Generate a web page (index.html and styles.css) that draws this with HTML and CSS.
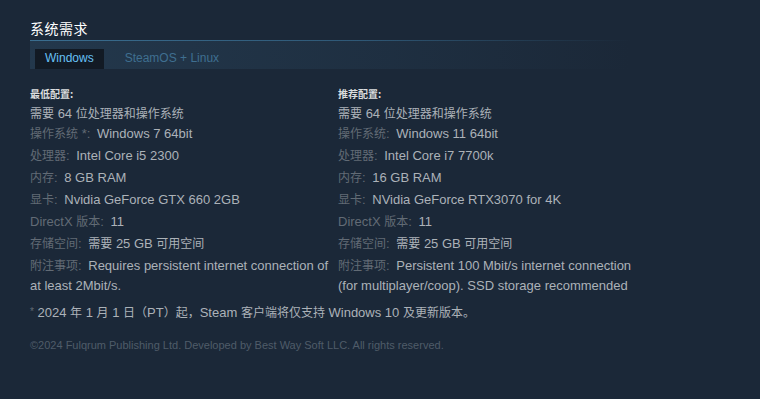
FILE: index.html
```html
<!DOCTYPE html>
<html lang="zh-CN">
<head>
  <meta charset="UTF-8" />
  <meta name="viewport" content="width=device-width, initial-scale=1.0"/>
  <title>系统需求</title>
  <link rel="stylesheet" href="styles.css">
</head>
<body>
  <div class="sysreq">
    <h2 class="sysreq-title">系统需求</h2>

    <div class="sysreq-tabs">
      <div class="tab active">Windows</div>
      <div class="tab">SteamOS + Linux</div>
    </div>

    <div class="sysreq-cols">
      <ul class="req-list">
        <li class="req-head">最低配置:</li>
        <li class="first"><span class="zh">需要</span> 64 <span class="zh">位处理器和操作系统</span></li>
        <li><strong><span class="zh">操作系统</span> *:</strong> Windows 7 64bit</li>
        <li><strong><span class="zh">处理器</span>:</strong> Intel Core i5 2300</li>
        <li><strong><span class="zh">内存</span>:</strong> 8 GB RAM</li>
        <li><strong><span class="zh">显卡</span>:</strong> Nvidia GeForce GTX 660 2GB</li>
        <li><strong>DirectX <span class="zh">版本</span>:</strong> 11</li>
        <li><strong><span class="zh">存储空间</span>:</strong> <span class="zh">需要</span> 25 GB <span class="zh">可用空间</span></li>
        <li><strong><span class="zh">附注事项</span>:</strong> Requires persistent internet connection of at least 2Mbit/s.</li>
      </ul>
      <ul class="req-list">
        <li class="req-head">推荐配置:</li>
        <li class="first"><span class="zh">需要</span> 64 <span class="zh">位处理器和操作系统</span></li>
        <li><strong><span class="zh">操作系统</span>:</strong> Windows 11 64bit</li>
        <li><strong><span class="zh">处理器</span>:</strong> Intel Core i7 7700k</li>
        <li><strong><span class="zh">内存</span>:</strong> 16 GB RAM</li>
        <li><strong><span class="zh">显卡</span>:</strong> NVidia GeForce RTX3070 for 4K</li>
        <li><strong>DirectX <span class="zh">版本</span>:</strong> 11</li>
        <li><strong><span class="zh">存储空间</span>:</strong> <span class="zh">需要</span> 25 GB <span class="zh">可用空间</span></li>
        <li><strong><span class="zh">附注事项</span>:</strong> Persistent 100 Mbit/s internet connection (for multiplayer/coop). SSD storage recommended</li>
      </ul>
    </div>

    <p class="footnote"><span class="star">*</span> 2024 <span class="zh">年</span> 1 <span class="zh">月</span> 1 <span class="zh">日（</span>PT<span class="zh">）起，</span>Steam <span class="zh">客户端将仅支持</span> Windows 10 <span class="zh">及更新版本。</span></p>

    <p class="legal">©2024 Fulqrum Publishing Ltd. Developed by Best Way Soft LLC. All rights reserved.</p>
  </div>
</body>
</html>
```

FILE: styles.css
```css
* {
  margin: 0;
  padding: 0;
  box-sizing: border-box;
}
body {
  background: #1b2838;
  font-family: 'Liberation Sans', Arial, 'Noto Sans CJK SC', sans-serif;
  color: #acb2b8;
  min-height: 100vh;
}
.zh {
  font-family: 'Noto Sans CJK SC', sans-serif;
  font-size: 12px;
  line-height: 1;
}
.sysreq {
  width: 630px;
  padding: 19px 0 0 30px;
}
.sysreq-title {
  font-family: 'Noto Sans CJK SC', sans-serif;
  font-size: 14px;
  font-weight: normal;
  line-height: 18px;
  letter-spacing: 0.5px;
  color: #ffffff;
  padding-bottom: 3px;
  border-bottom: 1px solid transparent;
  border-image: linear-gradient(90deg, #3a6e90 0%, #2f5876 55%, rgba(47, 88, 118, 0) 100%) 1;
}
.sysreq-tabs {
  display: flex;
  align-items: flex-end;
  gap: 11px;
  height: 28px;
  padding-left: 5px;
  background: linear-gradient(90deg, rgba(45, 75, 100, 0.45) 0%, rgba(40, 68, 92, 0.25) 60%, rgba(27, 40, 56, 0) 100%);
}
.tab {
  height: 20px;
  line-height: 19px;
  padding: 0 10px;
  font-size: 12px;
  color: #3f6f90;
}
.tab.active {
  background: #121a24;
  color: #67c1f5;
}
.sysreq-cols {
  display: grid;
  grid-template-columns: 300px 300px;
  column-gap: 8px;
  padding-top: 15px;
}
.req-list {
  list-style: none;
}
.req-list li {
  font-size: 13px;
  line-height: 20px;
  margin-bottom: 2px;
  color: #acb2b8;
}
.req-list li.req-head {
  font-family: 'Noto Sans CJK SC', sans-serif;
  font-size: 10px;
  font-weight: bold;
  color: #dcdedf;
  margin-bottom: 0;
}
.req-list li.first {
  margin-bottom: 0;
}
.req-list strong {
  font-weight: normal;
  color: #626b75;
  margin-right: 3px;
}
.footnote {
  margin-top: 5px;
  font-size: 13px;
  line-height: 20px;
  color: #acb2b8;
}
.star {
  font-size: 10px;
  color: #626b75;
  vertical-align: 2px;
  line-height: 1;
}
.legal {
  margin-top: 15px;
  font-size: 11px;
  line-height: 14px;
  color: #4f5c69;
}
```
